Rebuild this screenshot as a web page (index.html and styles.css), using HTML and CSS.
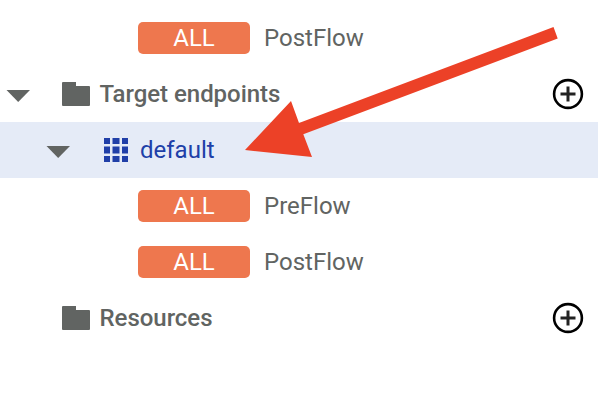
FILE: index.html
```html
<!DOCTYPE html>
<html lang="en">
<head>
<meta charset="utf-8">
<title>Navigator</title>
<link rel="stylesheet" href="styles.css">
</head>
<body>
<svg class="symbols" aria-hidden="true">
  <symbol id="caret" viewBox="0 0 24 12"><path d="M.5 0H24L12.2 12Z"/></symbol>
  <symbol id="folder" viewBox="0 0 28 24"><path d="M1 0H14V4H27Q28 4 28 5V23Q28 24 27 24H1Q0 24 0 23V1Q0 0 1 0Z"/></symbol>
  <symbol id="grid" viewBox="0 0 24 24"><path d="M0 0h6v6H0zM8.5 0h7v6h-7zM18 0h6v6h-6zM0 8.5h6v7H0zM8.5 8.5h7v7h-7zM18 8.5h6v7h-6zM0 18h6v6H0zM8.5 18h7v6h-7zM18 18h6v6h-6z"/></symbol>
  <symbol id="add" viewBox="0 0 32 32"><circle cx="16" cy="16" r="13.9" fill="none" stroke="#000" stroke-width="2.6"/><path d="M8.5 16h15M16 8.5v15" fill="none" stroke="#222" stroke-width="3"/></symbol>
</svg>
<main class="tree">
  <div class="row flow"><span class="badge">ALL</span><span class="label">PostFlow</span></div>
  <div class="row section">
    <svg class="caret"><use href="#caret"/></svg>
    <svg class="folder"><use href="#folder"/></svg>
    <span class="title">Target endpoints</span>
    <svg class="add"><use href="#add"/></svg>
  </div>
  <div class="row endpoint">
    <svg class="caret"><use href="#caret"/></svg>
    <svg class="grid"><use href="#grid"/></svg>
    <span class="name">default</span>
  </div>
  <div class="row flow"><span class="badge">ALL</span><span class="label">PreFlow</span></div>
  <div class="row flow"><span class="badge">ALL</span><span class="label">PostFlow</span></div>
  <div class="row section closed">
    <svg class="folder"><use href="#folder"/></svg>
    <span class="title">Resources</span>
    <svg class="add"><use href="#add"/></svg>
  </div>
</main>
<svg class="pointer" viewBox="0 0 598 404" aria-hidden="true"><path d="M245 150L291 101L299 123L553.5 27L557.7 38.5L303.3 134.3L312 157Z"/></svg>
</body>
</html>
```

FILE: styles.css
```css
body {
  position: relative;
  margin: 0;
  width: 598px;
  height: 404px;
  overflow: hidden;
  background: #fff;
  color: #616462;
  font: 24px/32px Roboto, sans-serif;
}
.symbols { display: none; }
.tree { padding-top: 10px; }
.row {
  display: flex;
  align-items: center;
  box-sizing: border-box;
  height: 56px;
  white-space: nowrap;
}
.row svg { flex: none; fill: currentColor; }
.flow { padding-left: 138px; }
.badge {
  width: 112px;
  height: 32px;
  margin-right: 14px;
  border-radius: 5px;
  background: #ee774e;
  color: #fff;
  text-align: center;
}
.section { padding: 0 14px 0 6px; }
.closed { padding-left: 62px; }
.caret { width: 24px; height: 12px; margin-top: 4px; }
.folder { width: 28px; height: 24px; }
.section .caret { margin-right: 32px; }
.title { margin-left: 9.5px; font-weight: 500; letter-spacing: -0.03px; }
.add { width: 32px; height: 32px; margin-left: auto; }
.endpoint {
  padding-left: 46px;
  background: #e5ebf7;
  color: #203fa8;
}
.endpoint .caret { margin-right: 34px; color: #616462; }
.grid { width: 24px; height: 24px; }
.name { margin-left: 12px; }
.pointer {
  position: absolute;
  top: 0;
  left: 0;
  width: 598px;
  height: 404px;
  fill: #ec4127;
}
```
